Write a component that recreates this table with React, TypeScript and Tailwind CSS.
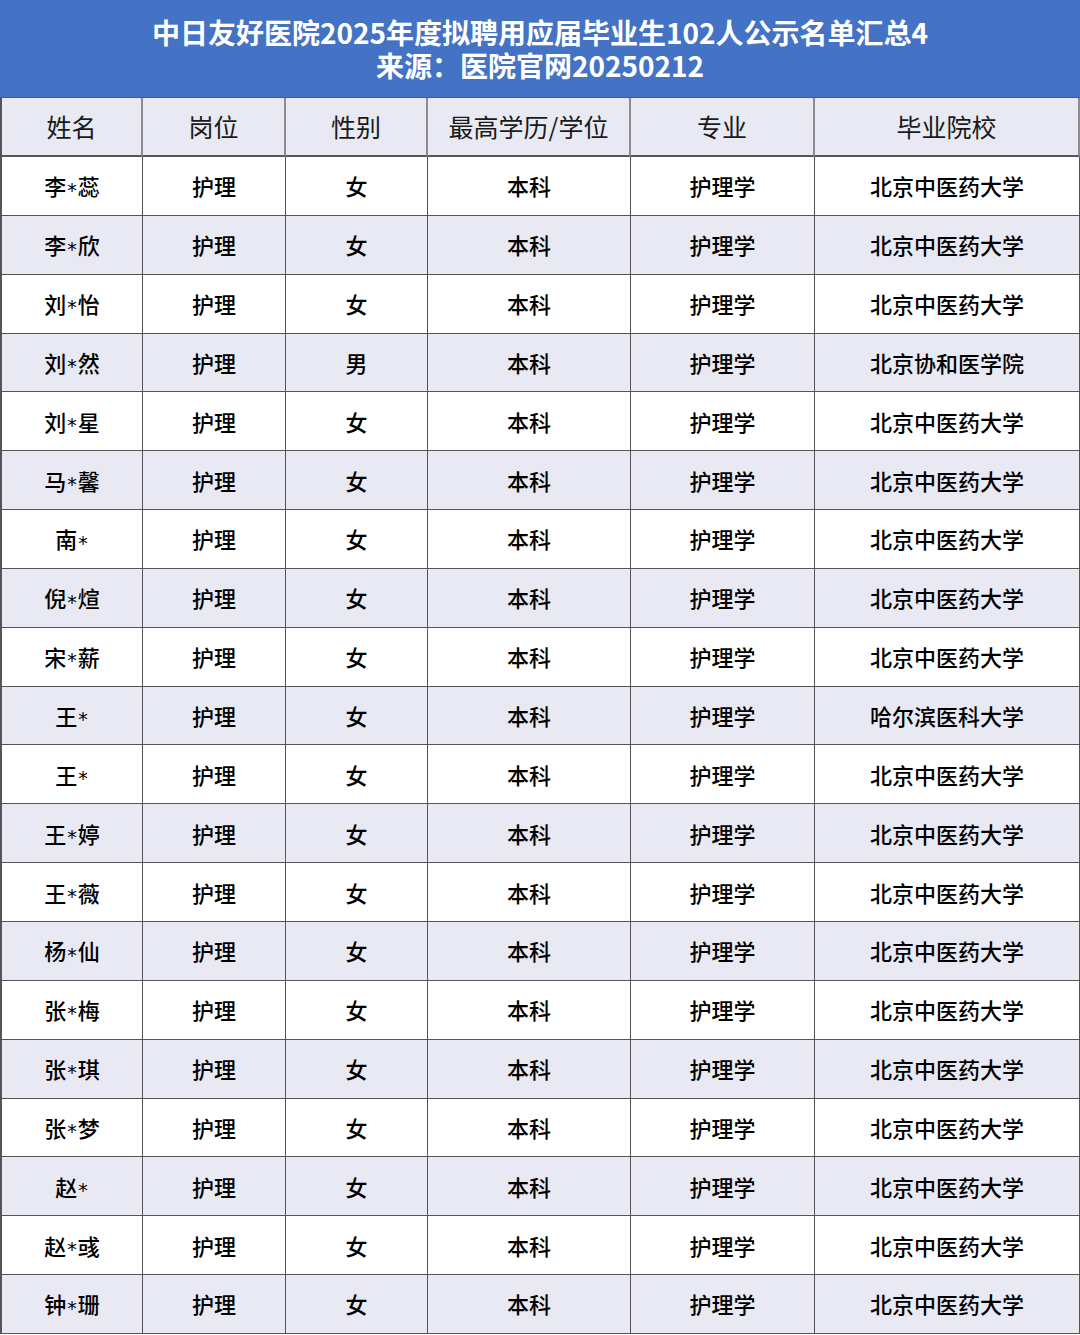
import React from "react";

const names = [
  "李*蕊", "李*欣", "刘*怡", "刘*然", "刘*星", "马*馨", "南*", "倪*煊", "宋*薪", "王*",
  "王*", "王*婷", "王*薇", "杨*仙", "张*梅", "张*琪", "张*梦", "赵*", "赵*彧", "钟*珊",
];

const schoolFor = (i: number) => {
  if (i === 3) return "北京协和医学院";
  if (i === 9) return "哈尔滨医科大学";
  return "北京中医药大学";
};

const headers = ["姓名", "岗位", "性别", "最高学历/学位", "专业", "毕业院校"];

const font = { fontFamily: '"Noto Sans CJK SC", "Noto Sans", sans-serif' };

export default function App() {
  return (
    <div className="w-[1080px] h-[1335px] bg-white overflow-hidden" style={font}>
      <div className="h-[98px] bg-[#4472c4] flex flex-col items-center justify-center gap-[1px] text-white text-[28px] font-bold leading-[32px] border-b border-[#3a5a9a]">
        <div>中日友好医院2025年度拟聘用应届毕业生102人公示名单汇总4</div>
        <div>来源：医院官网20250212</div>
      </div>
      <div className="grid grid-cols-[141px_143px_142px_203px_184px_1fr] border-l-2 border-[#555]">
        {headers.map((h) => (
          <div
            key={h}
            className="h-[59px] bg-[#e8e9f3] flex items-center justify-center text-[25px] text-[#1a1a1a] border-r-2 border-b-2 border-r-[#8c8c8c] border-b-[#555]"
          >
            {h}
          </div>
        ))}
        {names.map((n, i) => {
          const bg = i % 2 === 0 ? "bg-white" : "bg-[#e8e9f3]";
          const cells = [n, "护理", i === 3 ? "男" : "女", "本科", "护理学", schoolFor(i)];
          return cells.map((c, j) => (
            <div
              key={`${i}-${j}`}
              className={`h-[58.85px] ${bg} flex items-center justify-center text-[22px] font-medium text-black border-r-[1.5px] border-b-[1.5px] border-[#555]`}
            >
              {j === 0 ? (
                <span className="flex items-center">
                  <span>{c.split("*")[0]}</span>
                  <span className="text-[19px] relative top-[4px] mx-[1px]" style={{ fontFamily: '"DejaVu Sans", sans-serif' }}>*</span>
                  <span>{c.split("*")[1]}</span>
                </span>
              ) : (
                c
              )}
            </div>
          ));
        })}
      </div>
    </div>
  );
}
